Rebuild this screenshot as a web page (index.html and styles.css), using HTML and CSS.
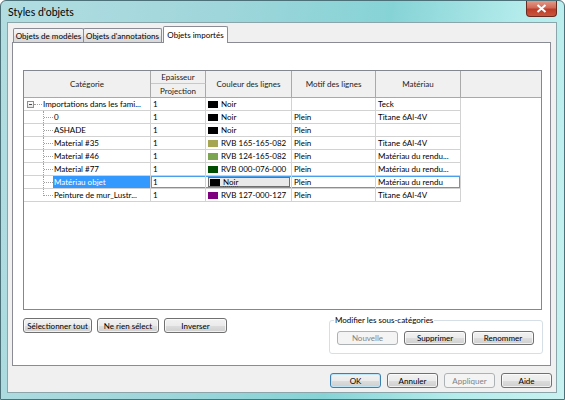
FILE: index.html
```html
<!DOCTYPE html>
<html lang="fr">
<head>
<meta charset="utf-8">
<title>Styles d'objets</title>
<link rel="stylesheet" href="styles.css">
</head>
<body>
<div class="window">
  <div class="titlebar">
    <span class="title">Styles d'objets</span>
    <div class="close"><svg width="11" height="9" viewBox="0 0 11 9"><path d="M1.5 1 L9.5 8 M9.5 1 L1.5 8" stroke="#fff" stroke-width="2"/></svg></div>
  </div>
  <div class="client">
    <div class="tabs">
      <div class="tab t1">Objets de modèles</div>
      <div class="tab t2">Objets d'annotations</div>
      <div class="tab t3 active">Objets importés</div>
    </div>
    <div class="panel">
      <div class="grid">
        <div class="h hcat">Catégorie</div>
        <div class="h hep1">Epaisseur</div>
        <div class="h hep2">Projection</div>
        <div class="h hcol">Couleur des lignes</div>
        <div class="h hmot">Motif des lignes</div>
        <div class="h hmat">Matériau</div>
        <div class="h hblank"></div>

        <div class="c cat root"><span class="expander"></span><span class="hconn"></span><span class="lbl">Importations dans les fami...</span></div>
        <div class="c">1</div>
        <div class="c"><span class="sw sw-black"></span>Noir</div>
        <div class="c"></div>
        <div class="c">Teck</div>
        <div class="b"></div>

        <div class="c cat child"><span class="branch"></span><span class="lbl">0</span></div>
        <div class="c">1</div>
        <div class="c"><span class="sw sw-black"></span>Noir</div>
        <div class="c">Plein</div>
        <div class="c">Titane 6Al-4V</div>
        <div class="b"></div>

        <div class="c cat child"><span class="branch"></span><span class="lbl">ASHADE</span></div>
        <div class="c">1</div>
        <div class="c"><span class="sw sw-black"></span>Noir</div>
        <div class="c">Plein</div>
        <div class="c"></div>
        <div class="b"></div>

        <div class="c cat child"><span class="branch"></span><span class="lbl">Material #35</span></div>
        <div class="c">1</div>
        <div class="c"><span class="sw sw-olive"></span>RVB 165-165-082</div>
        <div class="c">Plein</div>
        <div class="c">Titane 6Al-4V</div>
        <div class="b"></div>

        <div class="c cat child"><span class="branch"></span><span class="lbl">Material #46</span></div>
        <div class="c">1</div>
        <div class="c"><span class="sw sw-green"></span>RVB 124-165-082</div>
        <div class="c">Plein</div>
        <div class="c">Matériau du rendu...</div>
        <div class="b"></div>

        <div class="c cat child"><span class="branch"></span><span class="lbl">Material #77</span></div>
        <div class="c">1</div>
        <div class="c"><span class="sw sw-dark"></span>RVB 000-076-000</div>
        <div class="c">Plein</div>
        <div class="c">Matériau du rendu...</div>
        <div class="b"></div>

        <div class="c cat child"><span class="branch"></span><span class="lbl selected">Matériau objet</span></div>
        <div class="c sel sel-l">1</div>
        <div class="c sel"><div class="combo"><span class="sw sw-black"></span><span class="focus">Noir</span></div></div>
        <div class="c sel">Plein</div>
        <div class="c sel sel-r">Matériau du rendu</div>
        <div class="b"></div>

        <div class="c cat child"><span class="branch last"></span><span class="lbl">Peinture de mur_Lustr...</span></div>
        <div class="c">1</div>
        <div class="c"><span class="sw sw-purple"></span>RVB 127-000-127</div>
        <div class="c">Plein</div>
        <div class="c">Titane 6Al-4V</div>
        <div class="b"></div>
      </div>
      <div class="lower">
        <div class="selbtns">
          <button class="btn w69">Sélectionner tout</button>
          <button class="btn w62">Ne rien sélect</button>
          <button class="btn w63">Inverser</button>
        </div>
        <fieldset class="group">
          <legend>Modifier les sous-catégories</legend>
          <button class="btn gbtn w61 disabled">Nouvelle</button>
          <button class="btn gbtn w62">Supprimer</button>
          <button class="btn gbtn w62">Renommer</button>
        </fieldset>
      </div>
    </div>
    <div class="footer">
      <button class="btn w51 default">OK</button>
      <button class="btn w51">Annuler</button>
      <button class="btn w51 disabled">Appliquer</button>
      <button class="btn w51">Aide</button>
    </div>
  </div>
</div>
</body>
</html>
```
FILE: styles.css
```css
html, body { margin: 0; padding: 0; background: #ffffff; }
body { font-family: Lato, "Open Sans", "DejaVu Sans", sans-serif; font-size: 8px; color: #000; }

.window {
  width: 565px; height: 400px; box-sizing: border-box;
  border: 1px solid #4d7178; border-radius: 6px 6px 0 0;
  padding: 0 7px 6px 6px;
  display: flex; flex-direction: column;
  background: linear-gradient(100deg, #b2dde1 0%, #9fd6db 35%, #86d3d6 62%, #b3ebeb 82%, #c8f2f1 100%);
}

.titlebar { height: 21px; flex: none; display: flex; justify-content: space-between; align-items: flex-start; }
.title { font-size: 10.5px; padding-top: 5px; margin-left: 1px; color: #000; }
.close {
  width: 31px; height: 16px; box-sizing: border-box;
  border: 1px solid #6b2a20; border-top: none; border-radius: 0 0 4px 4px;
  background: linear-gradient(#e49a8a 0%, #d06a56 45%, #bd3d28 55%, #c9553c 100%);
  display: flex; align-items: center; justify-content: center;
}

.client {
  flex: 1; border: 1px solid #8ba6aa; background: #f0f0f0;
  display: flex; flex-direction: column;
  padding: 3px 5px 4px 4px;
}

.tabs { position: relative; z-index: 1; display: flex; align-items: flex-end; height: 17px; margin-bottom: -1px; margin-left: 1px; flex: none; }
.tab {
  box-sizing: border-box; height: 14px; margin-bottom: 1px;
  border: 1px solid #898c95; border-bottom: none; border-radius: 2px 2px 0 0;
  background: linear-gradient(#f6f6f6, #ececec 50%, #e0e0e0 51%, #d9d9d9);
  font-size: 8px; display: flex; align-items: center; justify-content: center;
  white-space: nowrap;
}
.t1 { width: 71px; }
.t2 { width: 79px; margin-left: -1px; }
.t3 { width: 65px; margin-left: 1px; }
.tab.active { height: 17px; margin-bottom: 0; background: #ffffff; padding-bottom: 1px; }

.panel {
  height: 324px; flex: none; box-sizing: border-box;
  border: 1px solid #898c95; background: #ffffff;
  padding: 27px 8px 0 10px;
  display: flex; flex-direction: column;
}

.grid {
  height: 240px; box-sizing: border-box; flex: none;
  border: 1px solid #828790; background: #fff;
  display: grid;
  grid-template-columns: 127px 55px 86px 84px 85px 1fr;
  grid-template-rows: 13px 14px repeat(8, 13px);
  align-content: start;
}
.h {
  background: #f0f0f0; color: #222;
  border-right: 1px solid #a9a9a9; border-bottom: 1px solid #a9a9a9;
  display: flex; align-items: center; justify-content: center;
  font-size: 8px; white-space: nowrap; overflow: hidden;
}
.hcat { grid-row: 1 / 3; grid-column: 1; }
.hep1 { grid-row: 1; grid-column: 2; border-bottom-color: #c8c8c8; }
.hep2 { grid-row: 2; grid-column: 2; }
.hcol { grid-row: 1 / 3; grid-column: 3; }
.hmot { grid-row: 1 / 3; grid-column: 4; }
.hmat { grid-row: 1 / 3; grid-column: 5; }
.hblank { grid-row: 1 / 3; grid-column: 6; border-right: none; }

.c {
  border-right: 1px solid #d2d2d2; border-bottom: 1px solid #d2d2d2;
  padding-left: 2px; line-height: 12px; white-space: nowrap; overflow: hidden;
  display: flex; align-items: center; font-size: 8px;
}
.b { background: #fff; }

.cat { padding-left: 0; }
.root .expander {
  width: 7px; height: 7px; box-sizing: border-box; flex: none; margin-left: 3px;
  border: 1px solid #8e8f8f;
  background: linear-gradient(#4a4a4a, #4a4a4a) center / 3px 1px no-repeat, linear-gradient(#ffffff, #e6e6e6);
}
.hconn { width: 8px; flex: none; border-top: 1px dotted #a0a0a0; margin-right: 1px; }
.child { padding-left: 19px; align-items: stretch; }
.branch { width: 11px; flex: none; box-sizing: border-box; border-left: 1px dotted #a0a0a0; display: flex; align-items: center; }
.branch::after { content: ""; flex: 1; border-top: 1px dotted #a0a0a0; margin-right: 1px; }
.branch.last { height: 7px; align-self: flex-start; align-items: flex-end; }
.lbl { line-height: 12px; }
.lbl.selected { flex: 1; background: #3399ff; color: #fff; padding-left: 1px; margin-left: -1px; }

.sel { box-shadow: inset 0 1px 0 #4a9fec, inset 0 -1px 0 #4a9fec; }
.sel-l { box-shadow: inset 0 1px 0 #4a9fec, inset 0 -1px 0 #4a9fec, inset 1px 0 0 #4a9fec; }
.sel-r { box-shadow: inset 0 1px 0 #4a9fec, inset 0 -1px 0 #4a9fec, inset -1px 0 0 #4a9fec; }
.combo {
  flex: 1; align-self: stretch; margin: 1px 1px 1px 0;
  box-sizing: border-box; border: 1px solid #6f6f6f; background: #e9e9e9;
  display: flex; align-items: center; padding-left: 1px; line-height: 9px;
}
.focus { border-bottom: 1px dotted #555; line-height: 8px; }

.sw { width: 10px; height: 7px; flex: none; margin-right: 3px; }
.sw-black { background: #000000; }
.sw-olive { background: #a5a552; }
.sw-green { background: #7ca552; }
.sw-dark { background: #004c00; }
.sw-purple { background: #7f007f; }

.lower { display: flex; justify-content: space-between; align-items: flex-start; margin-right: -1px; }
.selbtns { display: flex; gap: 5px; margin-top: 8px; }

.group {
  margin: 6px 0 0 0; padding: 6px 8px 8px 7px;
  width: 214px; box-sizing: border-box; min-width: 0;
  border: 1px solid #d5dfe5; border-radius: 3px;
  display: flex; gap: 6px;
}
.group legend { font-size: 8px; line-height: 9px; padding: 0 1px; margin-left: -3px; color: #000; }

.btn {
  box-sizing: border-box; height: 15px; padding: 0; margin: 0;
  font-family: inherit; font-size: 8px; color: #000;
  border: 1px solid #707070; border-radius: 3px;
  background: linear-gradient(#f2f2f2 0%, #ebebeb 50%, #dddddd 51%, #cfcfcf 100%);
  box-shadow: inset 0 0 0 1px rgba(255,255,255,0.7);
  display: flex; align-items: center; justify-content: center; white-space: nowrap;
}
.gbtn { height: 14px; }
.btn.disabled { border-color: #adb2b5; background: #f4f4f4; color: #838383; box-shadow: none; }
.btn.default { border-color: #3c7fb1; box-shadow: inset 0 0 0 1px #bfe5f8; }
.w51 { width: 51px; }
.w61 { width: 61px; }
.w62 { width: 62px; }
.w63 { width: 63px; }
.w69 { width: 69px; }

.footer { display: flex; justify-content: flex-end; gap: 6px; margin-top: 7px; margin-right: -1px; flex: none; }
```
